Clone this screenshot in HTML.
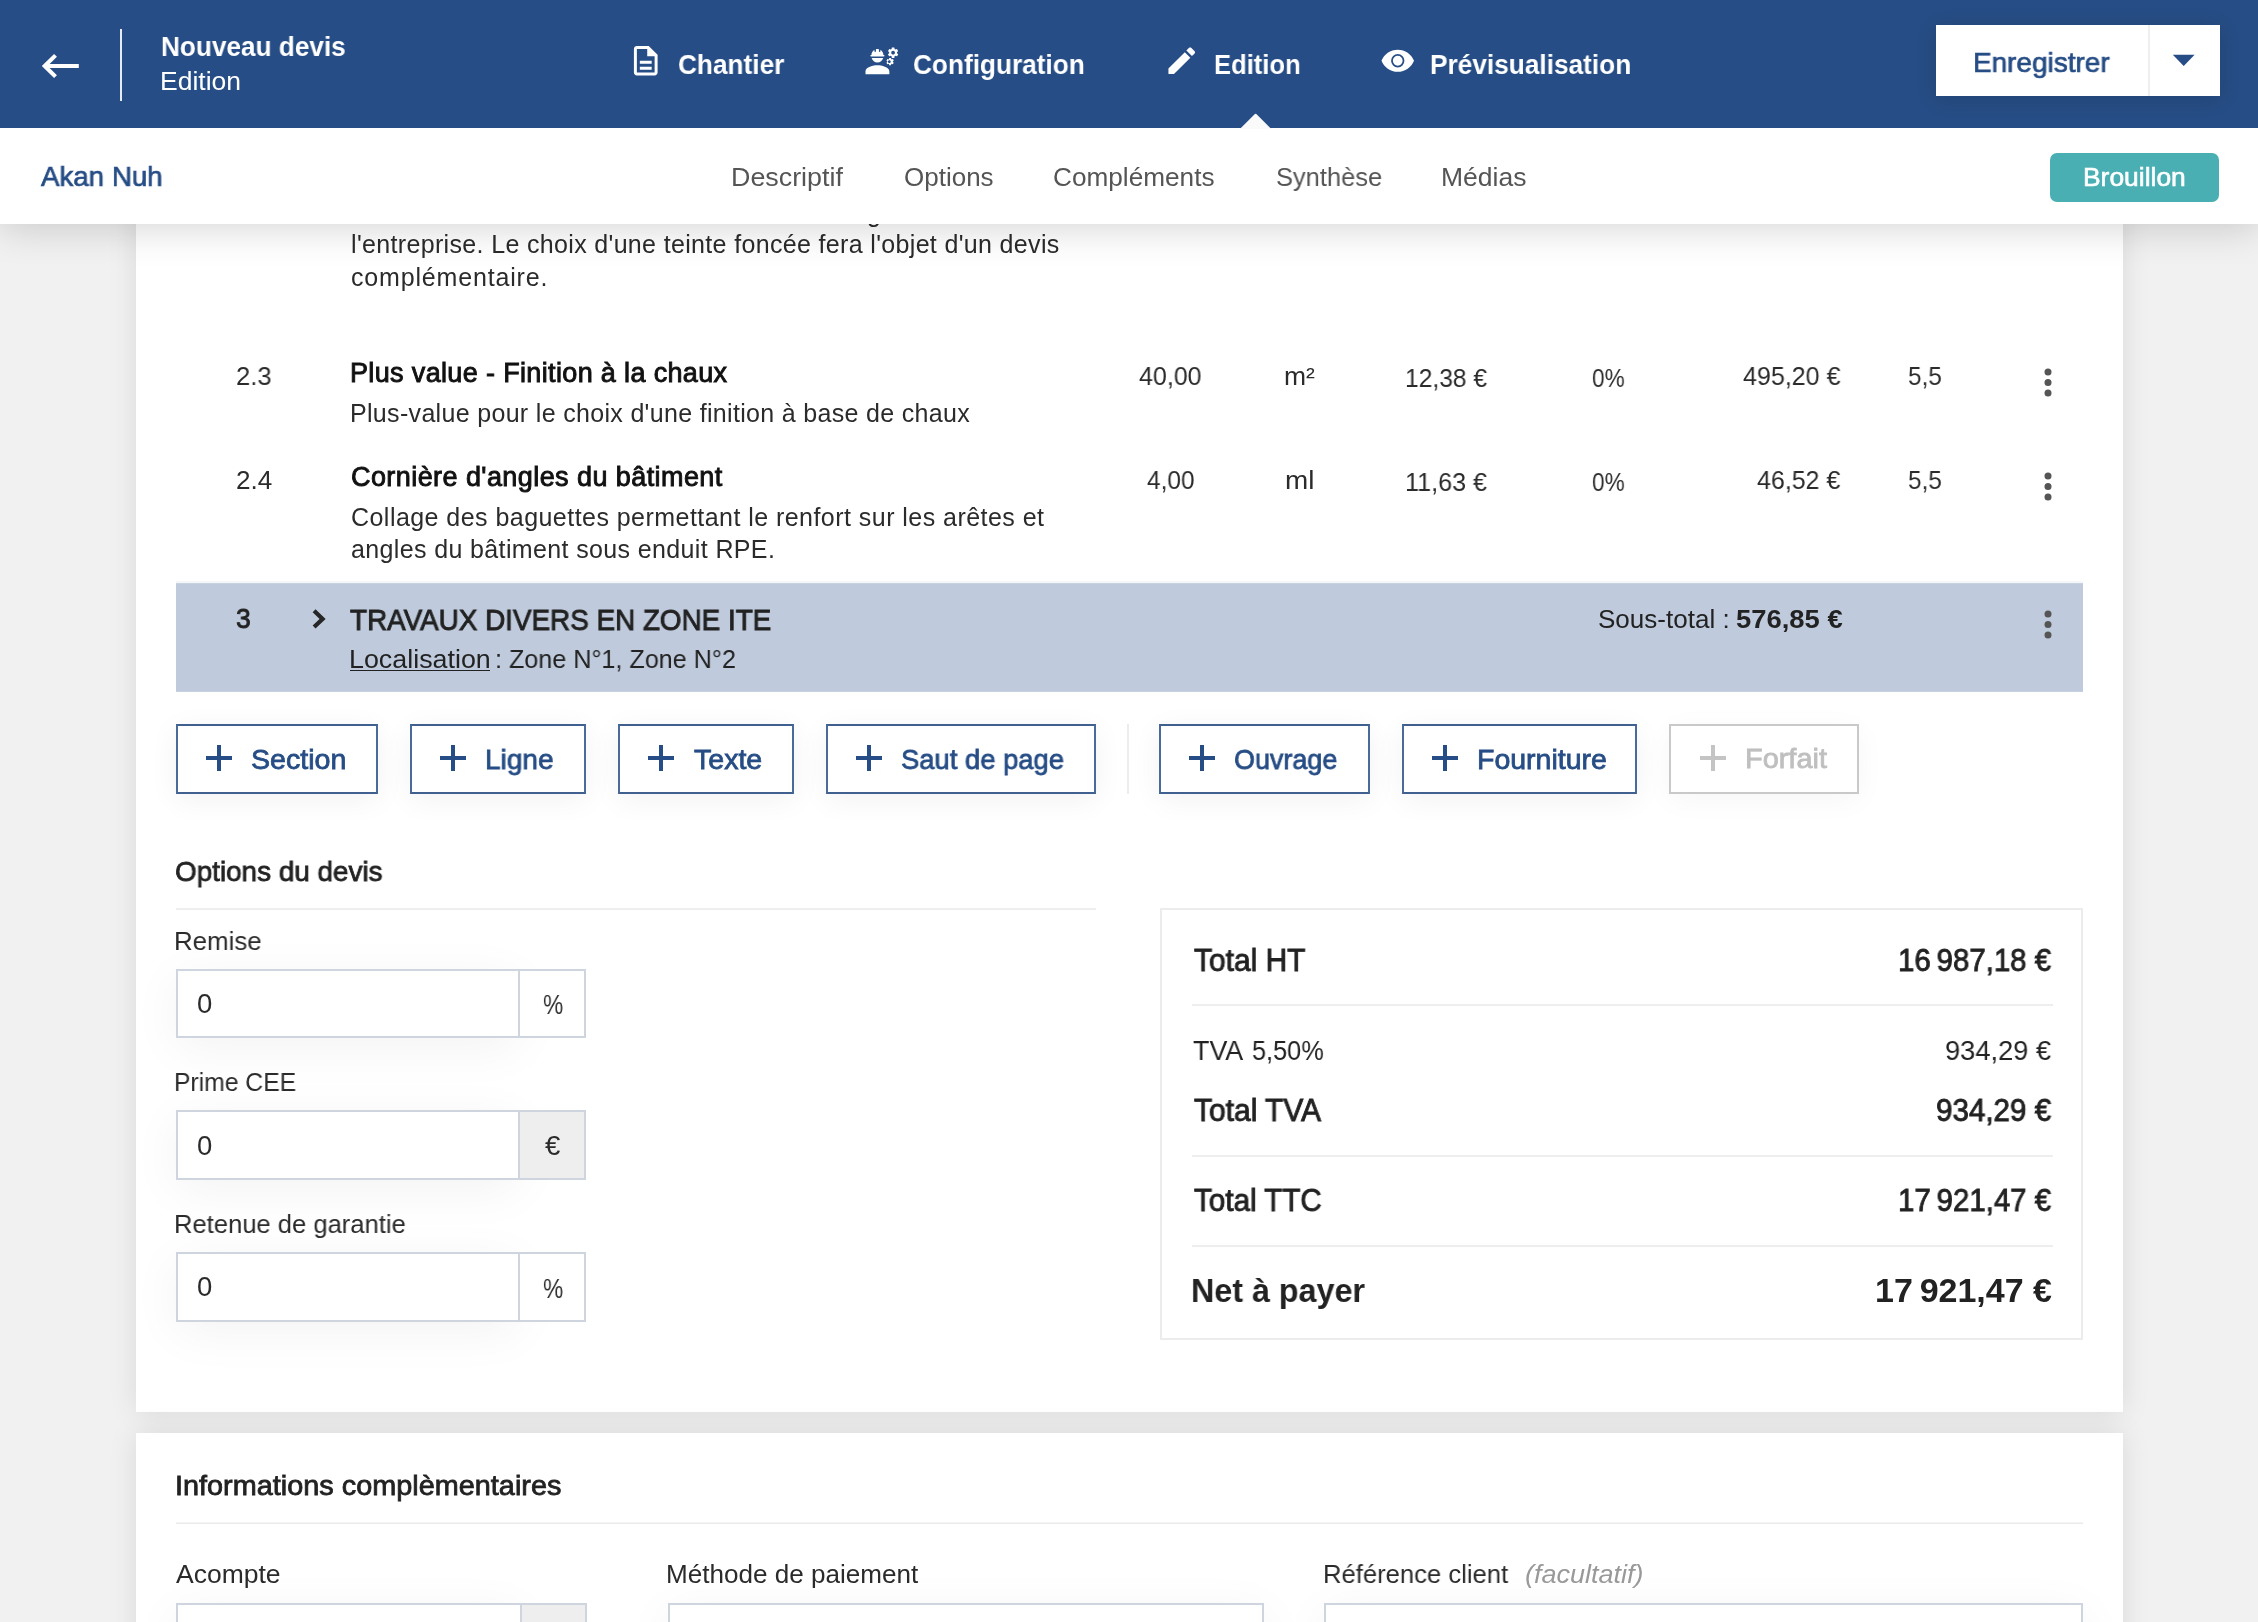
<!DOCTYPE html>
<html lang="fr"><head><meta charset="utf-8"><title>Nouveau devis - Edition</title>
<style>
html,body{margin:0;padding:0;overflow:hidden}
body{width:2258px;height:1622px;overflow:hidden;position:relative;background:#f1f1f1;font-family:"Liberation Sans",sans-serif}
#root{position:absolute;left:0;top:0;width:2258px;height:1622px;overflow:hidden;background:#f1f1f1}
.a{position:absolute;box-sizing:content-box}
.t{position:absolute;white-space:pre;line-height:1;transform-origin:0 50%;z-index:5;will-change:transform}
svg{display:block;overflow:visible}
</style></head>
<body>
<div id="root">
<div class="a" style="left:136px;top:60px;width:1987px;height:1352px;background:#fff;box-shadow:0 0 27px rgba(0,0,0,0.10)"></div>
<div class="a" style="left:136px;top:1433px;width:1987px;height:400px;background:#fff;box-shadow:0 0 27px rgba(0,0,0,0.10)"></div>
<svg class="a" style="left:2042.6px;top:367.2px" width="10" height="31.0" viewBox="0 0 10 31.0"><circle cx="5" cy="5" r="3.5" fill="#555555"/><circle cx="5" cy="15.5" r="3.5" fill="#555555"/><circle cx="5" cy="26.0" r="3.5" fill="#555555"/></svg>
<svg class="a" style="left:2042.6px;top:471.3px" width="10" height="31.0" viewBox="0 0 10 31.0"><circle cx="5" cy="5" r="3.5" fill="#555555"/><circle cx="5" cy="15.5" r="3.5" fill="#555555"/><circle cx="5" cy="26.0" r="3.5" fill="#555555"/></svg>
<div class="a" style="left:176px;top:581px;width:1907px;height:2px;background:#f4f6f9"></div>
<div class="a" style="left:176px;top:583px;width:1907px;height:109px;background:linear-gradient(#cfd8e5 0,#bfcbdc 1px,#bfcbdc 108px,#cdd6e4 109px)"></div>
<svg class="a" style="left:308px;top:606px" width="24" height="26" viewBox="0 0 24 26"><path d="M6.1 4.8L14.6 12.9L6.1 21" stroke="#262626" stroke-width="4.2" fill="none"/></svg>
<div class="a" style="left:349.5px;top:669.5px;width:140.8px;height:1.9px;background:#222;z-index:6"></div>
<svg class="a" style="left:2042.8px;top:609.3px" width="10" height="31.0" viewBox="0 0 10 31.0"><circle cx="5" cy="5" r="3.5" fill="#555555"/><circle cx="5" cy="15.5" r="3.5" fill="#555555"/><circle cx="5" cy="26.0" r="3.5" fill="#555555"/></svg>
<div class="a" style="left:176px;top:724px;width:198px;height:66px;border:2px solid;border-color:#40608f #4a6a99;background:#fff;box-shadow:0 6px 30px rgba(0,0,0,0.055);"></div><svg class="a" style="left:206.3px;top:745px" width="26" height="26" viewBox="0 0 26 26"><path d="M13.0 0V26M0 13.0H26" stroke="#264d85" stroke-width="4.0" fill="none"/></svg>
<div class="a" style="left:410px;top:724px;width:172px;height:66px;border:2px solid;border-color:#40608f #4a6a99;background:#fff;box-shadow:0 6px 30px rgba(0,0,0,0.055);"></div><svg class="a" style="left:440.1px;top:745px" width="26" height="26" viewBox="0 0 26 26"><path d="M13.0 0V26M0 13.0H26" stroke="#264d85" stroke-width="4.0" fill="none"/></svg>
<div class="a" style="left:618px;top:724px;width:172px;height:66px;border:2px solid;border-color:#40608f #4a6a99;background:#fff;box-shadow:0 6px 30px rgba(0,0,0,0.055);"></div><svg class="a" style="left:648px;top:745px" width="26" height="26" viewBox="0 0 26 26"><path d="M13.0 0V26M0 13.0H26" stroke="#264d85" stroke-width="4.0" fill="none"/></svg>
<div class="a" style="left:825.5px;top:724px;width:266.5px;height:66px;border:2px solid;border-color:#40608f #4a6a99;background:#fff;box-shadow:0 6px 30px rgba(0,0,0,0.055);"></div><svg class="a" style="left:856.3px;top:745px" width="26" height="26" viewBox="0 0 26 26"><path d="M13.0 0V26M0 13.0H26" stroke="#264d85" stroke-width="4.0" fill="none"/></svg>
<div class="a" style="left:1126.5px;top:724px;width:2px;height:70px;background:#ececec"></div>
<div class="a" style="left:1158.5px;top:724px;width:207.0px;height:66px;border:2px solid;border-color:#40608f #4a6a99;background:#fff;box-shadow:0 6px 30px rgba(0,0,0,0.055);"></div><svg class="a" style="left:1188.9px;top:745px" width="26" height="26" viewBox="0 0 26 26"><path d="M13.0 0V26M0 13.0H26" stroke="#264d85" stroke-width="4.0" fill="none"/></svg>
<div class="a" style="left:1401.5px;top:724px;width:231.5px;height:66px;border:2px solid;border-color:#40608f #4a6a99;background:#fff;box-shadow:0 6px 30px rgba(0,0,0,0.055);"></div><svg class="a" style="left:1432px;top:745px" width="26" height="26" viewBox="0 0 26 26"><path d="M13.0 0V26M0 13.0H26" stroke="#264d85" stroke-width="4.0" fill="none"/></svg>
<div class="a" style="left:1669px;top:724px;width:186px;height:66px;border:2px solid;border-color:#c9c9c9;background:#fff;box-shadow:0 6px 30px rgba(0,0,0,0.04);"></div><svg class="a" style="left:1700px;top:745px" width="26" height="26" viewBox="0 0 26 26"><path d="M13.0 0V26M0 13.0H26" stroke="#c4c4c4" stroke-width="4.0" fill="none"/></svg>
<div class="a" style="left:176px;top:908px;width:920px;height:2px;background:#eeeeee"></div>
<div class="a" style="left:176px;top:969px;width:340px;height:65px;border:2px solid #ced5df;border-right:0;background:#fff;box-shadow:0 10px 50px rgba(0,0,0,0.05)"></div><div class="a" style="left:518px;top:969px;width:64px;height:65px;border:2px solid #ced5df;background:#ffffff"></div>
<div class="a" style="left:176px;top:1110px;width:340px;height:66px;border:2px solid #ced5df;border-right:0;background:#fff;box-shadow:0 10px 50px rgba(0,0,0,0.05)"></div><div class="a" style="left:518px;top:1110px;width:64px;height:66px;border:2px solid #ced5df;background:#eeeeee"></div>
<div class="a" style="left:176px;top:1252px;width:340px;height:66px;border:2px solid #ced5df;border-right:0;background:#fff;box-shadow:0 10px 50px rgba(0,0,0,0.05)"></div><div class="a" style="left:518px;top:1252px;width:64px;height:66px;border:2px solid #ced5df;background:#ffffff"></div>
<div class="a" style="left:1160px;top:908px;width:919px;height:428px;border:2px solid #ececec;background:#fff"></div>
<div class="a" style="left:1192px;top:1004px;width:861px;height:2px;background:#eeeeee"></div>
<div class="a" style="left:1192px;top:1155px;width:861px;height:2px;background:#eeeeee"></div>
<div class="a" style="left:1192px;top:1244.5px;width:861px;height:2px;background:#eeeeee"></div>
<div class="a" style="left:176px;top:1522px;width:1907px;height:2px;background:linear-gradient(#f4f4f4 50%,#ebebeb 50%)"></div>
<div class="a" style="left:176px;top:1603px;width:342px;height:73px;border:2px solid #ced5df;border-right:0;background:#fff;box-shadow:0 10px 50px rgba(0,0,0,0.05)"></div><div class="a" style="left:520px;top:1603px;width:63px;height:73px;border:2px solid #ced5df;background:#eeeeee"></div>
<div class="a" style="left:668px;top:1603px;width:592px;height:80px;border:2px solid #ced5df;background:#fff;box-shadow:0 10px 50px rgba(0,0,0,0.05)"></div>
<div class="a" style="left:1323.5px;top:1603px;width:755.5px;height:80px;border:2px solid #ced5df;background:#fff;box-shadow:0 10px 50px rgba(0,0,0,0.05)"></div>
<div class="a" style="left:0;top:128px;width:2258px;height:96px;background:#fff;box-shadow:0 2px 40px rgba(0,0,0,0.19);z-index:20"></div>
<div class="a" style="left:0;top:0;width:2258px;height:128px;background:#264d85;z-index:21"></div>
<svg class="a" style="left:1240px;top:113px;z-index:22" width="32" height="16" viewBox="0 0 32 16"><path d="M0.6 15.2L14.9 1.1Q15.6 0.5 16.3 1.1L30.6 15.2V16H0.6z" fill="#fafafa"/></svg>
<svg class="a" style="left:36px;top:48px;z-index:30" width="48" height="36" viewBox="0 0 48 36"><path d="M19.5 7.4L8.7 18L19.5 28.6M8.7 18H42.8" stroke="#fff" stroke-width="4.1" fill="none" stroke-linejoin="miter"/></svg>
<div class="a" style="left:120px;top:29px;width:2px;height:72px;background:#e6ebf2;z-index:30"></div>
<svg class="a" style="left:628.0px;top:43.3px;z-index:30" width="35.5" height="35.5" viewBox="0 0 24 24"><path d="M8 16h8v2H8zm0-4h8v2H8zm6-10H6c-1.1 0-2 .9-2 2v16c0 1.1.89 2 1.99 2H18c1.1 0 2-.9 2-2V8l-6-6zm4 18H6V4h7v5h5v11z" fill="#fff" fill-rule="evenodd"/></svg>
<svg class="a" style="left:863.6px;top:42.9px;z-index:30" width="35.8" height="35.8" viewBox="0 0 24 24"><path d="M9 15c-2.67 0-8 1.34-8 4v2h16v-2c0-2.66-5.33-4-8-4zM22.1 6.84c.01-.11.02-.22.02-.34 0-.12-.01-.23-.03-.34l.74-.58c.07-.05.08-.15.04-.22l-.7-1.21c-.04-.08-.14-.1-.21-.08l-.86.35c-.18-.14-.38-.25-.59-.34l-.13-.93c-.02-.09-.09-.15-.18-.15h-1.4c-.09 0-.16.06-.17.15l-.13.93c-.21.09-.41.21-.59.34l-.87-.35c-.08-.03-.17 0-.21.08l-.7 1.21c-.04.08-.03.17.04.22l.74.58c-.02.11-.03.23-.03.34 0 .11.01.23.03.34l-.74.58c-.07.05-.08.15-.04.22l.7 1.21c.04.08.14.1.21.08l.87-.35c.18.14.38.25.59.34l.13.93c.01.09.08.15.17.15h1.4c.09 0 .16-.06.17-.15l.13-.93c.21-.09.41-.21.59-.34l.87.35c.08.03.17 0 .21-.08l.7-1.21c.04-.08.03-.17-.04-.22l-.73-.58zM19.5 7.75c-.69 0-1.25-.56-1.25-1.25s.56-1.250 1.250-1.250 1.250.56 1.250 1.250-.56 1.250-1.250 1.250zM19.92 11.68l-.5-.87c-.03-.06-.1-.08-.15-.06l-.62.25c-.13-.1-.27-.18-.42-.24l-.09-.66c-.02-.06-.08-.1-.14-.1h-1c-.06 0-.11.04-.12.11l-.09.66c-.15.06-.29.15-.42.24l-.62-.25c-.06-.02-.12 0-.15.06l-.5.87c-.03.06-.02.12.03.16l.53.41c-.01.08-.02.16-.02.24 0 .08.01.17.02.24l-.53.41c-.05.04-.06.11-.03.16l.5.87c.03.06.1.08.15.06l.62-.25c.13.1.27.18.42.24l.09.66c.01.07.06.11.12.11h1c.06 0 .12-.04.12-.11l.09-.66c.15-.06.29-.15.42-.24l.62.25c.06.02.12 0 .15-.06l.5-.87c.03-.06.02-.12-.03-.16l-.52-.41c.01-.08.02-.16.02-.24 0-.08-.01-.17-.02-.24l.53-.41c.05-.04.06-.11.04-.16zM17 13.39c-.5 0-.9-.4-.9-.9s.4-.9.9-.9.9.4.9.9-.4.9-.9.9zM4.74 9h8.53c.27 0 .49-.22.49-.49v-.02c0-.27-.22-.49-.49-.49H13c0-1.48-.81-2.75-2-3.45V5.500c0 .28-.22.5-.5.5s-.5-.22-.5-.5V4.140C9.680 4.060 9.350 4 9 4s-.68.060-1 .140V5.500c0 .28-.22.5-.5.5S7 5.780 7 5.500v-.95C5.810 5.250 5 6.520 5 8h-.26c-.27 0-.49.220-.49.490v.03c0 .26.220.48.490.48zM9 13c1.86 0 3.41-1.28 3.86-3H5.140c.45 1.720 2 3 3.860 3z" fill="#fff" fill-rule="nonzero"/></svg>
<svg class="a" style="left:1164.0px;top:43.3px;z-index:30" width="35.5" height="35.5" viewBox="0 0 24 24"><path d="M3 17.25V21h3.75L17.81 9.94l-3.75-3.75L3 17.25zM20.71 7.04c.39-.39.39-1.02 0-1.41l-2.34-2.34c-.39-.39-1.02-.39-1.41 0l-1.83 1.83 3.75 3.75 1.83-1.83z" fill="#fff" fill-rule="evenodd"/></svg>
<svg class="a" style="left:1380.25px;top:43.25px;z-index:30" width="35.5" height="35.5" viewBox="0 0 24 24"><path d="M12 4.5C7 4.5 2.73 7.61 1 12c1.73 4.39 6 7.5 11 7.5s9.27-3.11 11-7.5c-1.73-4.39-6-7.5-11-7.5zM12 7.5a4.5 4.5 0 1 0 0 9a4.5 4.5 0 1 0 0-9zM12 8.7a3.3 3.3 0 1 0 0 6.6a3.3 3.3 0 1 0 0-6.6z" fill="#fff" fill-rule="evenodd"/></svg>
<div class="a" style="left:1936px;top:25px;width:283.5px;height:71px;background:#fff;box-shadow:0 3px 20px rgba(0,0,0,0.12);z-index:25"></div>
<div class="a" style="left:2148px;top:25px;width:2px;height:71px;background:#efefef;z-index:26"></div>
<svg class="a" style="left:2172px;top:54px;z-index:30" width="24" height="13" viewBox="0 0 24 13"><path d="M0.8 0.8H22.6L11.7 11.9z" fill="#264d85"/></svg>
<div class="a" style="left:2050px;top:153px;width:169px;height:48.8px;background:#4aafb3;border-radius:7px;z-index:25"></div>
<span class="t" style="left:161.08px;top:32.2px;font-size:28.5px;color:#ffffff;font-weight:700;z-index:30;transform:scaleX(0.9182)">Nouveau devis</span>
<span class="t" style="left:160.01px;top:68.0px;font-size:26.5px;color:#ffffff;z-index:30;transform:scaleX(0.9963)">Edition</span>
<span class="t" style="left:677.78px;top:49.7px;font-size:28.5px;color:#ffffff;font-weight:700;z-index:30;transform:scaleX(0.9196)">Chantier</span>
<span class="t" style="left:913.08px;top:49.7px;font-size:28.5px;color:#ffffff;font-weight:700;z-index:30;transform:scaleX(0.9193)">Configuration</span>
<span class="t" style="left:1214.40px;top:49.7px;font-size:28.5px;color:#ffffff;font-weight:700;z-index:30;transform:scaleX(0.8975)">Edition</span>
<span class="t" style="left:1430.48px;top:49.7px;font-size:28.5px;color:#ffffff;font-weight:700;z-index:30;transform:scaleX(0.9205)">Prévisualisation</span>
<span class="t" style="left:1973.18px;top:48.3px;font-size:28.5px;color:#264d85;-webkit-text-stroke:0.7px #264d85;z-index:30;transform:scaleX(0.9799)">Enregistrer</span>
<span class="t" style="left:40.84px;top:162.3px;font-size:28.5px;color:#264d85;-webkit-text-stroke:0.7px #264d85;z-index:30;transform:scaleX(0.9717)">Akan Nuh</span>
<span class="t" style="left:730.94px;top:164.4px;font-size:26px;color:#555555;z-index:30;transform:scaleX(1.0324)">Descriptif</span>
<span class="t" style="left:903.50px;top:164.4px;font-size:26px;color:#555555;z-index:30;transform:scaleX(0.9954)">Options</span>
<span class="t" style="left:1053.49px;top:164.4px;font-size:26px;color:#555555;z-index:30;transform:scaleX(1.0069)">Compléments</span>
<span class="t" style="left:1275.72px;top:164.4px;font-size:26px;color:#555555;z-index:30;transform:scaleX(0.9790)">Synthèse</span>
<span class="t" style="left:1440.96px;top:164.4px;font-size:26px;color:#555555;z-index:30;transform:scaleX(1.0194)">Médias</span>
<span class="t" style="left:2082.67px;top:164.4px;font-size:26px;color:#ffffff;-webkit-text-stroke:0.6px #ffffff;z-index:30;transform:scaleX(1.0162)">Brouillon</span>
<span class="t" style="left:867.00px;top:201.2px;font-size:25px;color:#2b2b2b">g</span>
<span class="t" style="left:350.50px;top:232.4px;font-size:25px;color:#2b2b2b;letter-spacing:0.340px">l&#x27;entreprise. Le choix d&#x27;une teinte foncée fera l&#x27;objet d&#x27;un devis</span>
<span class="t" style="left:350.50px;top:264.6px;font-size:25px;color:#2b2b2b;letter-spacing:0.832px">complémentaire.</span>
<span class="t" style="left:236.22px;top:363.0px;font-size:26px;color:#2b2b2b;transform:scaleX(0.9832)">2.3</span>
<span class="t" style="left:350.15px;top:360.3px;font-size:27px;color:#111111;-webkit-text-stroke:0.9px #111111;letter-spacing:0.352px">Plus value - Finition à la chaux</span>
<span class="t" style="left:349.70px;top:400.5px;font-size:25px;color:#2b2b2b;letter-spacing:0.321px">Plus-value pour le choix d&#x27;une finition à base de chaux</span>
<span class="t" style="left:1139.20px;top:363.0px;font-size:26px;color:#2b2b2b;transform:scaleX(0.9612)">40,00</span>
<span class="t" style="left:1284.48px;top:363.3px;font-size:26px;color:#2b2b2b;transform:scaleX(1.0183)">m²</span>
<span class="t" style="left:1404.95px;top:365.2px;font-size:26px;color:#2b2b2b;transform:scaleX(0.9457)">12,38 €</span>
<span class="t" style="left:1591.63px;top:365.2px;font-size:26px;color:#2b2b2b;transform:scaleX(0.8694)">0%</span>
<span class="t" style="left:1742.60px;top:363.3px;font-size:26px;color:#2b2b2b;transform:scaleX(0.9632)">495,20 €</span>
<span class="t" style="left:1907.87px;top:363.3px;font-size:26px;color:#2b2b2b;transform:scaleX(0.9342)">5,5</span>
<span class="t" style="left:236.20px;top:466.7px;font-size:26px;color:#2b2b2b;transform:scaleX(1.0034)">2.4</span>
<span class="t" style="left:351.15px;top:463.9px;font-size:27px;color:#111111;-webkit-text-stroke:0.9px #111111;letter-spacing:0.426px">Cornière d&#x27;angles du bâtiment</span>
<span class="t" style="left:350.70px;top:504.5px;font-size:25px;color:#2b2b2b;letter-spacing:0.455px">Collage des baguettes permettant le renfort sur les arêtes et</span>
<span class="t" style="left:350.70px;top:536.9px;font-size:25px;color:#2b2b2b;letter-spacing:0.367px">angles du bâtiment sous enduit RPE.</span>
<span class="t" style="left:1146.50px;top:466.7px;font-size:26px;color:#2b2b2b;transform:scaleX(0.9373)">4,00</span>
<span class="t" style="left:1285.43px;top:466.8px;font-size:26px;color:#2b2b2b;transform:scaleX(1.0718)">ml</span>
<span class="t" style="left:1404.93px;top:468.8px;font-size:26px;color:#2b2b2b;transform:scaleX(0.9673)">11,63 €</span>
<span class="t" style="left:1591.63px;top:468.8px;font-size:26px;color:#2b2b2b;transform:scaleX(0.8694)">0%</span>
<span class="t" style="left:1756.80px;top:466.8px;font-size:26px;color:#2b2b2b;transform:scaleX(0.9601)">46,52 €</span>
<span class="t" style="left:1907.87px;top:466.8px;font-size:26px;color:#2b2b2b;transform:scaleX(0.9342)">5,5</span>
<span class="t" style="left:236.49px;top:603.8px;font-size:28.5px;color:#222222;-webkit-text-stroke:0.9px #222222;transform:scaleX(0.9262)">3</span>
<span class="t" style="left:350.13px;top:605.3px;font-size:29.3px;color:#222222;-webkit-text-stroke:0.9px #222222;transform:scaleX(0.9502)">TRAVAUX DIVERS EN ZONE ITE</span>
<span class="t" style="left:348.94px;top:645.8px;font-size:26px;color:#222222;transform:scaleX(1.0325)">Localisation</span>
<span class="t" style="left:495.07px;top:645.8px;font-size:26px;color:#222222;transform:scaleX(0.9669)">: Zone N°1, Zone N°2</span>
<span class="t" style="left:1597.50px;top:606.0px;font-size:26px;color:#222222;transform:scaleX(1.0009)">Sous-total :</span>
<span class="t" style="left:1735.90px;top:606.0px;font-size:26px;color:#222222;font-weight:700;transform:scaleX(1.0541)">576,85 €</span>
<span class="t" style="left:251.20px;top:744.6px;font-size:28.5px;color:#264d85;-webkit-text-stroke:0.8px #264d85;transform:scaleX(1.0031)">Section</span>
<span class="t" style="left:484.83px;top:744.6px;font-size:28.5px;color:#264d85;-webkit-text-stroke:0.8px #264d85;transform:scaleX(0.9825)">Ligne</span>
<span class="t" style="left:693.70px;top:744.6px;font-size:28.5px;color:#264d85;-webkit-text-stroke:0.8px #264d85;transform:scaleX(1.0019)">Texte</span>
<span class="t" style="left:901.42px;top:744.6px;font-size:28.5px;color:#264d85;-webkit-text-stroke:0.8px #264d85;transform:scaleX(0.9613)">Saut de page</span>
<span class="t" style="left:1234.13px;top:744.6px;font-size:28.5px;color:#264d85;-webkit-text-stroke:0.8px #264d85;transform:scaleX(0.9449)">Ouvrage</span>
<span class="t" style="left:1476.51px;top:744.6px;font-size:28.5px;color:#264d85;-webkit-text-stroke:0.8px #264d85;transform:scaleX(0.9965)">Fourniture</span>
<span class="t" style="left:1744.78px;top:744.4px;font-size:28.5px;color:#bfbfbf;-webkit-text-stroke:0.8px #bfbfbf;transform:scaleX(1.0144)">Forfait</span>
<span class="t" style="left:175.41px;top:856.7px;font-size:28.5px;color:#222222;-webkit-text-stroke:0.8px #222222;transform:scaleX(0.9776)">Options du devis</span>
<span class="t" style="left:174.01px;top:928.0px;font-size:26px;color:#2b2b2b;transform:scaleX(0.9933)">Remise</span>
<span class="t" style="left:197.22px;top:990.0px;font-size:27.5px;color:#2b2b2b;transform:scaleX(0.9786)">0</span>
<span class="t" style="left:542.50px;top:991.2px;font-size:27.5px;color:#2b2b2b;transform:scaleX(0.8292)">%</span>
<span class="t" style="left:174.10px;top:1069.2px;font-size:26px;color:#2b2b2b;transform:scaleX(0.9498)">Prime CEE</span>
<span class="t" style="left:197.22px;top:1132.2px;font-size:27.5px;color:#2b2b2b;transform:scaleX(0.9786)">0</span>
<span class="t" style="left:544.90px;top:1132.2px;font-size:27.5px;color:#2b2b2b;transform:scaleX(0.9733)">€</span>
<span class="t" style="left:174.03px;top:1210.8px;font-size:26px;color:#2b2b2b;transform:scaleX(0.9834)">Retenue de garantie</span>
<span class="t" style="left:197.22px;top:1272.7px;font-size:27.5px;color:#2b2b2b;transform:scaleX(0.9786)">0</span>
<span class="t" style="left:542.50px;top:1275.2px;font-size:27.5px;color:#2b2b2b;transform:scaleX(0.8292)">%</span>
<span class="t" style="left:1193.52px;top:945.3px;font-size:30.5px;color:#222222;-webkit-text-stroke:0.85px #222222;transform:scaleX(0.9809)">Total HT</span>
<span class="t" style="left:1897.78px;top:945.3px;font-size:30.5px;color:#222222;-webkit-text-stroke:0.85px #222222;transform:scaleX(0.9642)">16 987,18 €</span>
<span class="t" style="left:1193.10px;top:1035.5px;font-size:28.5px;color:#222222;transform:scaleX(0.9418)">TVA</span>
<span class="t" style="left:1251.91px;top:1035.5px;font-size:28.5px;color:#222222;transform:scaleX(0.8884)">5,50%</span>
<span class="t" style="left:1945.04px;top:1035.5px;font-size:28.5px;color:#222222;transform:scaleX(0.9565)">934,29 €</span>
<span class="t" style="left:1193.52px;top:1095.2px;font-size:30.5px;color:#222222;-webkit-text-stroke:0.85px #222222;transform:scaleX(0.9821)">Total TVA</span>
<span class="t" style="left:1935.74px;top:1095.2px;font-size:30.5px;color:#222222;-webkit-text-stroke:0.85px #222222;transform:scaleX(0.9696)">934,29 €</span>
<span class="t" style="left:1193.51px;top:1184.8px;font-size:30.5px;color:#222222;-webkit-text-stroke:0.85px #222222;transform:scaleX(0.9711)">Total TTC</span>
<span class="t" style="left:1897.78px;top:1184.8px;font-size:30.5px;color:#222222;-webkit-text-stroke:0.85px #222222;transform:scaleX(0.9642)">17 921,47 €</span>
<span class="t" style="left:1191.20px;top:1273.2px;font-size:34px;color:#222222;font-weight:700;transform:scaleX(0.9493)">Net à payer</span>
<span class="t" style="left:1874.60px;top:1273.2px;font-size:34px;color:#222222;font-weight:700;transform:scaleX(0.9979)">17 921,47 €</span>
<span class="t" style="left:174.58px;top:1471.2px;font-size:28.5px;color:#222222;-webkit-text-stroke:0.8px #222222;transform:scaleX(1.0121)">Informations complèmentaires</span>
<span class="t" style="left:176.20px;top:1561.0px;font-size:26px;color:#2b2b2b;transform:scaleX(1.0192)">Acompte</span>
<span class="t" style="left:666.20px;top:1561.1px;font-size:26px;color:#2b2b2b;transform:scaleX(1.0025)">Méthode de paiement</span>
<span class="t" style="left:1322.93px;top:1561.0px;font-size:26px;color:#2b2b2b;transform:scaleX(0.9852)">Référence client</span>
<span class="t" style="left:1525.36px;top:1561.0px;font-size:26px;color:#999999;font-style:italic;transform:scaleX(1.0392)">(facultatif)</span>
</div>
</body></html>
